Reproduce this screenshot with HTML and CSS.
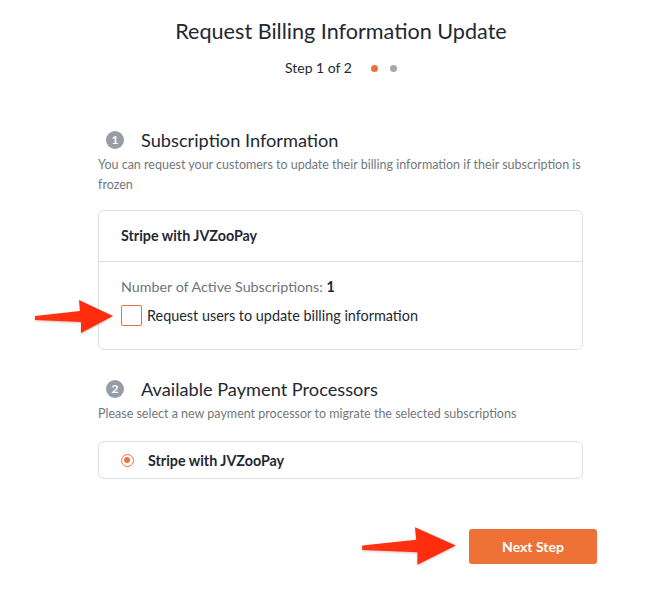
FILE: index.html
```html
<!DOCTYPE html>
<html lang="en">
<head>
    <meta charset="UTF-8">
    <title>Request Billing Information Update</title>
    <link rel="stylesheet" href="styles.css">
</head>
<body>
<div class="page">
    <h1 class="title">Request Billing Information Update</h1>
    <div class="steps">
        <span>Step 1 of 2</span>
        <i class="dot on"></i>
        <i class="dot"></i>
    </div>

    <div class="wrap">
        <div class="sec-head"><span class="num">1</span><h2>Subscription Information</h2></div>
        <p class="desc">You can request your customers to update their billing information if their subscription is frozen</p>

        <div class="card">
            <div class="card-head">Stripe with JVZooPay</div>
            <div class="card-body">
                <div class="count">Number of Active Subscriptions: <b>1</b></div>
                <label class="check"><span class="tick"></span>Request users to update billing information</label>
            </div>
        </div>

        <div class="sec-head sec2"><span class="num">2</span><h2>Available Payment Processors</h2></div>
        <p class="desc">Please select a new payment processor to migrate the selected subscriptions</p>

        <div class="card option">
            <span class="radio"></span>
            <b>Stripe with JVZooPay</b>
        </div>

        <div class="foot">
            <button class="btn">Next Step</button>
        </div>
    </div>

    <!-- red arrows pointing at the checkbox and the button -->
    <svg class="arrow a1" viewBox="0 0 80 37" preserveAspectRatio="none">
        <defs>
            <linearGradient id="g1" x1="0" y1="0" x2="1" y2="0">
                <stop offset="0" stop-color="#ff3413"/>
                <stop offset="1" stop-color="#ff2a0c"/>
            </linearGradient>
        </defs>
        <path d="M1 18 L46 13 L45 2 L79 18 L47 35 L47 24 L1 22 Z" fill="url(#g1)"/>
    </svg>
    <svg class="arrow a2" viewBox="0 0 80 37" preserveAspectRatio="none">
        <path d="M1 18 L46 13 L45 2 L79 18 L47 35 L47 24 L1 22 Z" fill="url(#g1)"/>
    </svg>
</div>
</body>
</html>
```

FILE: styles.css
```css
html, body{
    margin: 0;
    background: #fff;
}
body{
    font-family: Lato, "Open Sans", sans-serif;
    color: #1f2833;
}
.page{
    position: relative;
    width: 660px;
    height: 596px;
    overflow: hidden;
}
.title{
    margin: 0;
    padding-top: 17px;
    padding-left: 22px;
    font-size: 21.6px;
    line-height: 28px;
    font-weight: 400;
    text-align: center;
}
.steps{
    display: flex;
    justify-content: center;
    align-items: center;
    margin-top: 13px;
    padding-left: 34px;
    font-size: 14px;
    line-height: 20px;
}
.steps span{
    margin-right: 19px;
}
.dot{
    width: 7px;
    height: 7px;
    border-radius: 50%;
    background: #a2a8b0;
    margin-right: 12px;
}
.dot.on{
    background: #ee7238;
}
.wrap{
    width: 485px;
    margin: 50px 0 0 98px;
}
.sec-head{
    display: flex;
    align-items: center;
    padding-left: 8px;
    height: 24px;
}
.sec-head h2{
    margin: 0;
    font-size: 18.2px;
    line-height: 24px;
    font-weight: 400;
}
.num{
    width: 18px;
    height: 18px;
    border-radius: 50%;
    background: #979da6;
    color: #fff;
    font-size: 12px;
    font-weight: 700;
    line-height: 18px;
    text-align: center;
    margin-right: 17px;
}
.desc{
    margin: 3px 0 0;
    font-size: 12.5px;
    line-height: 20px;
    color: #72777e;
}
.card{
    margin-top: 15px;
    border: 1px solid #dcdfe3;
    border-radius: 6px;
}
.card-head{
    padding: 16px 22px 17px;
    font-size: 14.3px;
    line-height: 17px;
    font-weight: 700;
    border-bottom: 1px solid #dcdfe3;
}
.card-body{
    padding: 15px 22px 23px;
}
.count{
    font-size: 14.3px;
    line-height: 20px;
    color: #6f747b;
}
.count b{
    color: #1f2833;
}
.check{
    display: flex;
    align-items: center;
    margin-top: 8px;
    font-size: 14.4px;
    line-height: 21px;
}
.tick{
    display: block;
    flex: none;
    box-sizing: border-box;
    width: 21px;
    height: 21px;
    border: 1px solid #e8733e;
    border-radius: 2px;
    margin-right: 5px;
    background: #fff;
}
.sec2{
    margin-top: 27px;
}
.option{
    display: flex;
    align-items: center;
    height: 36px;
    margin-top: 17px;
    padding-left: 22px;
    font-size: 14.3px;
}
.radio{
    box-sizing: border-box;
    width: 13px;
    height: 13px;
    border: 1.5px solid #ee7238;
    border-radius: 50%;
    margin-right: 14px;
    position: relative;
}
.radio::after{
    content: "";
    position: absolute;
    left: 2px;
    top: 2px;
    width: 6px;
    height: 6px;
    border-radius: 50%;
    background: #ee7238;
}
.foot{
    display: flex;
    justify-content: flex-end;
    margin: 50px -14px 0 0;
}
.btn{
    width: 128px;
    height: 35px;
    border: 0;
    border-radius: 3px;
    background: #ee7238;
    color: #fff;
    font-family: Lato, sans-serif;
    font-size: 14px;
    font-weight: 700;
}
.arrow{
    position: absolute;
    filter: drop-shadow(0 1px 1px rgba(120, 0, 0, 0.25));
}
.a1{
    left: 34px;
    top: 298px;
    width: 80px;
    height: 37px;
}
.a2{
    left: 361px;
    top: 525px;
    width: 96px;
    height: 42px;
}
```
